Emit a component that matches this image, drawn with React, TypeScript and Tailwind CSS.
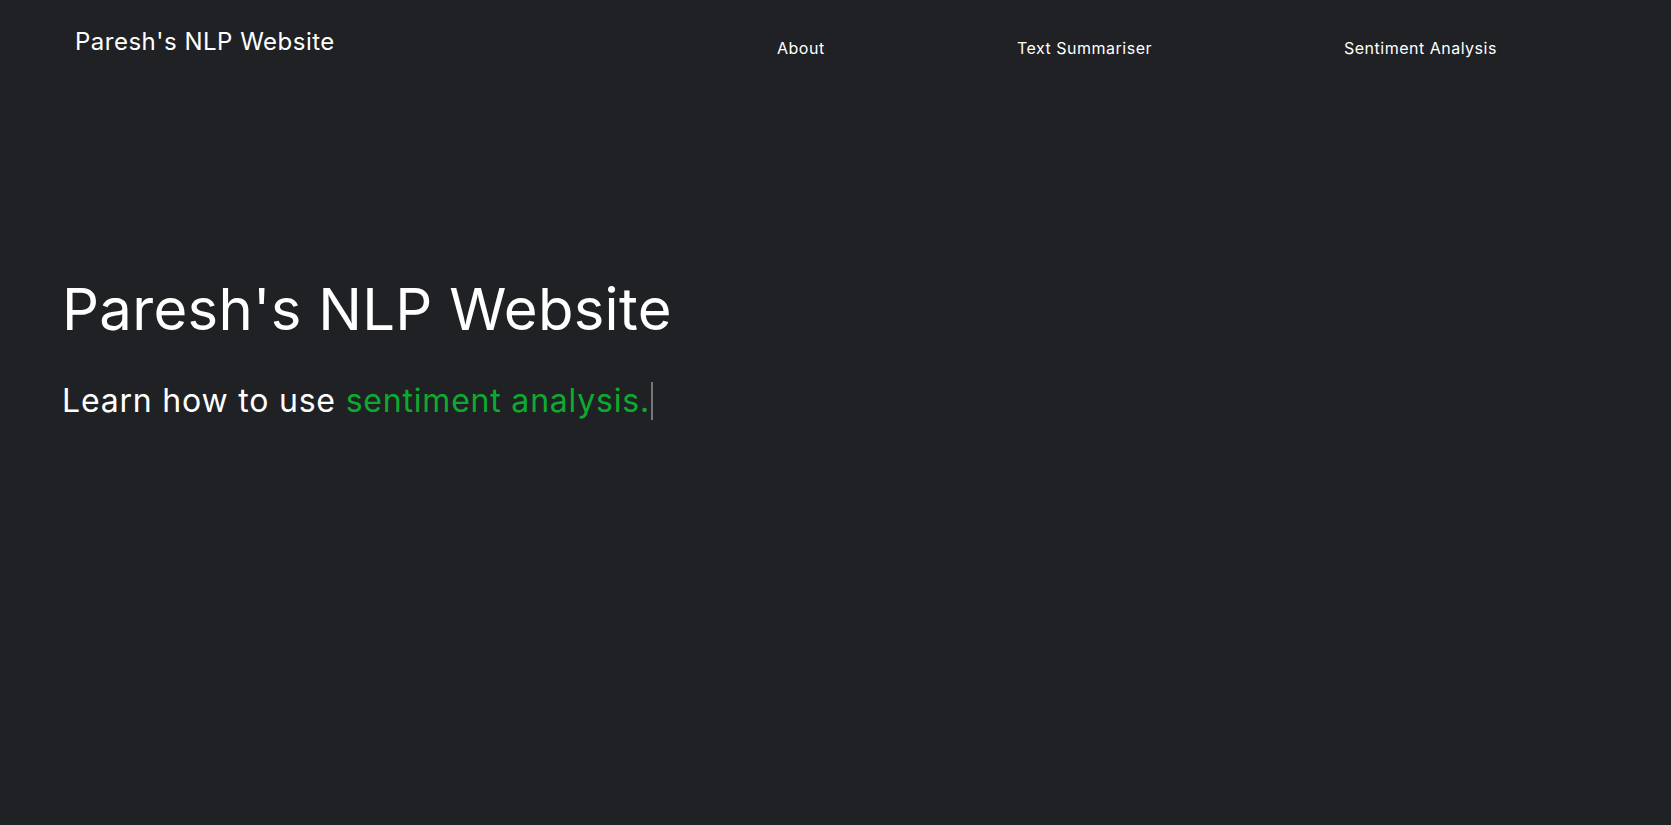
import React from 'react';

const links = [
  { label: 'About', w: 'w-[240px]' },
  { label: 'Text Summariser', w: 'w-[327px]' },
  { label: 'Sentiment Analysis', w: 'w-auto' },
];

export default function App() {
  return (
    <div className="min-h-screen w-full bg-[#202124] text-white font-['Inter','Liberation_Sans',sans-serif]">
      <header className="flex items-start">
        <div className="w-[777px] pl-[75px] pt-[26px]">
          <a href="#" className="text-[24px] leading-8 font-normal tracking-[0.5px]">Paresh's NLP Website</a>
        </div>
        <nav className="flex pt-[36px]">
          {links.map((l) => (
            <div key={l.label} className={l.w}>
              <a href="#" className="text-[16px] leading-6 tracking-[0.5px]">{l.label}</a>
            </div>
          ))}
        </nav>
      </header>

      <main className="pl-[62px] pt-[219px]">
        <h1 className="text-[58px] leading-[60px] font-normal tracking-[0.3px]">Paresh's NLP Website</h1>
        <p className="mt-[42px] text-[32px] leading-[40px] tracking-[0.8px] flex items-center">
          <span>Learn how to use&nbsp;</span>
          <span className="text-[#0cab2f]">sentiment analysis.</span>
          <span className="inline-block w-[2px] h-[38px] bg-[#777777] ml-[1px]" />
        </p>
      </main>
    </div>
  );
}
